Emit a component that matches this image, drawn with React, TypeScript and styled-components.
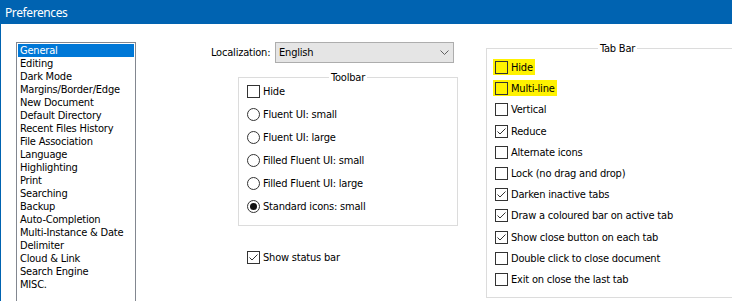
import React from "react";
import styled, { createGlobalStyle } from "styled-components";

const Global = createGlobalStyle`
  html, body { margin: 0; padding: 0; background: #ffffff; }
  body {
    width: 732px; height: 301px; overflow: hidden;
    font-family: "DejaVu Sans Condensed", "DejaVu Sans", sans-serif;
    font-size: 11px; color: #000;
    letter-spacing: -0.2px;
  }
`;

const Window = styled.div`
  width: 732px;
  height: 301px;
  display: flex;
  flex-direction: column;
  overflow: hidden;
  background: #fff;
`;

const TitleBar = styled.div`
  height: 24px;
  flex: none;
  background: #0063b1;
  color: #fff;
  font-family: "Noto Sans", sans-serif;
  font-size: 12px;
  letter-spacing: -0.4px;
  display: flex;
  align-items: center;
  padding-left: 5px;
`;

const Body = styled.div`
  flex: 1;
  min-height: 0;
  display: flex;
  align-items: flex-start;
  border-left: 1px solid #0063b1;
  overflow: hidden;
`;

const CategoryList = styled.ul`
  flex: none;
  margin: 18px 0 0 15px;
  padding: 1px;
  list-style: none;
  width: 120px;
  height: 280px;
  box-sizing: border-box;
  border: 1px solid #828790;
`;

const CategoryItem = styled.li<{ $selected?: boolean }>`
  height: 13px;
  line-height: 13px;
  padding-left: 2px;
  white-space: nowrap;
  background: ${(p) => (p.$selected ? "#0078d7" : "transparent")};
  color: ${(p) => (p.$selected ? "#fff" : "#000")};
`;

const MiddleColumn = styled.div`
  flex: none;
  width: 246px;
  margin: 18px 0 0 75px;
  display: flex;
  flex-direction: column;
`;

const LocRow = styled.div`
  display: flex;
  align-items: center;
  height: 21px;
`;

const LocLabel = styled.span`
  flex: 1;
`;

const Combo = styled.div`
  width: 179px;
  height: 21px;
  margin-right: 3px;
  box-sizing: border-box;
  border: 1px solid #adadad;
  background: #e5e5e5;
  display: flex;
  align-items: center;
  padding: 0 4px 0 3px;
`;

const ComboText = styled.span`
  flex: 1;
`;

const GroupBox = styled.fieldset<{ $width: number; $top: number; $left: number }>`
  margin: ${(p) => p.$top}px 0 0 ${(p) => p.$left}px;
  width: ${(p) => p.$width}px;
  box-sizing: border-box;
  min-width: 0;
  border: 1px solid #dcdcdc;
  padding: 0;
`;

const Legend = styled.legend`
  margin: 0 auto;
  padding: 0 2px;
  line-height: 13px;
  height: 13px;
`;

const GroupContent = styled.div<{ $padTop: number; $padBottom: number; $gap: number }>`
  display: flex;
  flex-direction: column;
  align-items: flex-start;
  padding: ${(p) => p.$padTop}px 0 ${(p) => p.$padBottom}px 8px;
  gap: ${(p) => p.$gap}px;
`;

const Row = styled.label<{ $highlight?: boolean }>`
  display: flex;
  align-items: center;
  gap: 3px;
  height: 13px;
  white-space: nowrap;
  background: ${(p) => (p.$highlight ? "#fff200" : "transparent")};
  padding: ${(p) => (p.$highlight ? "2px 2px 1px" : "0")};
  margin: ${(p) => (p.$highlight ? "-2px -2px -1px" : "0")};
`;

const StatusRow = styled(Row)`
  margin: 25px 0 0 36px;
`;

const Box = styled.span`
  width: 13px;
  height: 13px;
  flex: none;
  box-sizing: border-box;
  border: 1px solid #333;
  display: flex;
`;

const Circle = styled.span`
  width: 13px;
  height: 13px;
  flex: none;
  box-sizing: border-box;
  border: 1px solid #333;
  border-radius: 50%;
  display: flex;
  align-items: center;
  justify-content: center;
`;

const Dot = styled.span`
  width: 7px;
  height: 7px;
  border-radius: 50%;
  background: #111;
`;

const RightColumn = styled.div`
  flex: none;
  margin: 18px 0 0 29px;
`;

const CheckBox = ({ checked }: { checked?: boolean }) => (
  <Box>
    {checked && (
      <svg width="11" height="11" viewBox="0 0 11 11">
        <path d="M1.5 5.5 L4 8 L9.5 2.5" fill="none" stroke="#333" strokeWidth="1" />
      </svg>
    )}
  </Box>
);

const Radio = ({ checked }: { checked?: boolean }) => <Circle>{checked && <Dot />}</Circle>;

const categories = [
  "General",
  "Editing",
  "Dark Mode",
  "Margins/Border/Edge",
  "New Document",
  "Default Directory",
  "Recent Files History",
  "File Association",
  "Language",
  "Highlighting",
  "Print",
  "Searching",
  "Backup",
  "Auto-Completion",
  "Multi-Instance & Date",
  "Delimiter",
  "Cloud & Link",
  "Search Engine",
  "MISC.",
];

const toolbarOptions = [
  { label: "Fluent UI: small", checked: false },
  { label: "Fluent UI: large", checked: false },
  { label: "Filled Fluent UI: small", checked: false },
  { label: "Filled Fluent UI: large", checked: false },
  { label: "Standard icons: small", checked: true },
];

const tabOptions = [
  { label: "Hide", checked: false, hl: true },
  { label: "Multi-line", checked: false, hl: true },
  { label: "Vertical", checked: false },
  { label: "Reduce", checked: true },
  { label: "Alternate icons", checked: false },
  { label: "Lock (no drag and drop)", checked: false },
  { label: "Darken inactive tabs", checked: true },
  { label: "Draw a coloured bar on active tab", checked: true },
  { label: "Show close button on each tab", checked: true },
  { label: "Double click to close document", checked: false },
  { label: "Exit on close the last tab", checked: false },
];

const Chevron = () => (
  <svg width="9" height="5" viewBox="0 0 9 5">
    <path d="M0.5 0.5 L4.5 4.5 L8.5 0.5" fill="none" stroke="#606060" strokeWidth="1" />
  </svg>
);

export default function App() {
  return (
    <Window>
      <Global />
      <TitleBar>Preferences</TitleBar>
      <Body>
        <CategoryList>
          {categories.map((c, i) => (
            <CategoryItem key={c} $selected={i === 0}>
              {c}
            </CategoryItem>
          ))}
        </CategoryList>
        <MiddleColumn>
          <LocRow>
            <LocLabel>Localization:</LocLabel>
            <Combo>
              <ComboText>English</ComboText>
              <Chevron />
            </Combo>
          </LocRow>
          <GroupBox $width={220} $top={8} $left={27}>
            <Legend>Toolbar</Legend>
            <GroupContent $padTop={1} $padBottom={12} $gap={10}>
              <Row>
                <CheckBox />
                Hide
              </Row>
              {toolbarOptions.map((o) => (
                <Row key={o.label}>
                  <Radio checked={o.checked} />
                  {o.label}
                </Row>
              ))}
            </GroupContent>
          </GroupBox>
          <StatusRow>
            <CheckBox checked />
            Show status bar
          </StatusRow>
        </MiddleColumn>
        <RightColumn>
          <GroupBox $width={263} $top={0} $left={0}>
            <Legend>Tab Bar</Legend>
            <GroupContent $padTop={6} $padBottom={11} $gap={8.2}>
              {tabOptions.map((o) => (
                <Row key={o.label} $highlight={o.hl}>
                  <CheckBox checked={o.checked} />
                  {o.label}
                </Row>
              ))}
            </GroupContent>
          </GroupBox>
        </RightColumn>
      </Body>
    </Window>
  );
}
